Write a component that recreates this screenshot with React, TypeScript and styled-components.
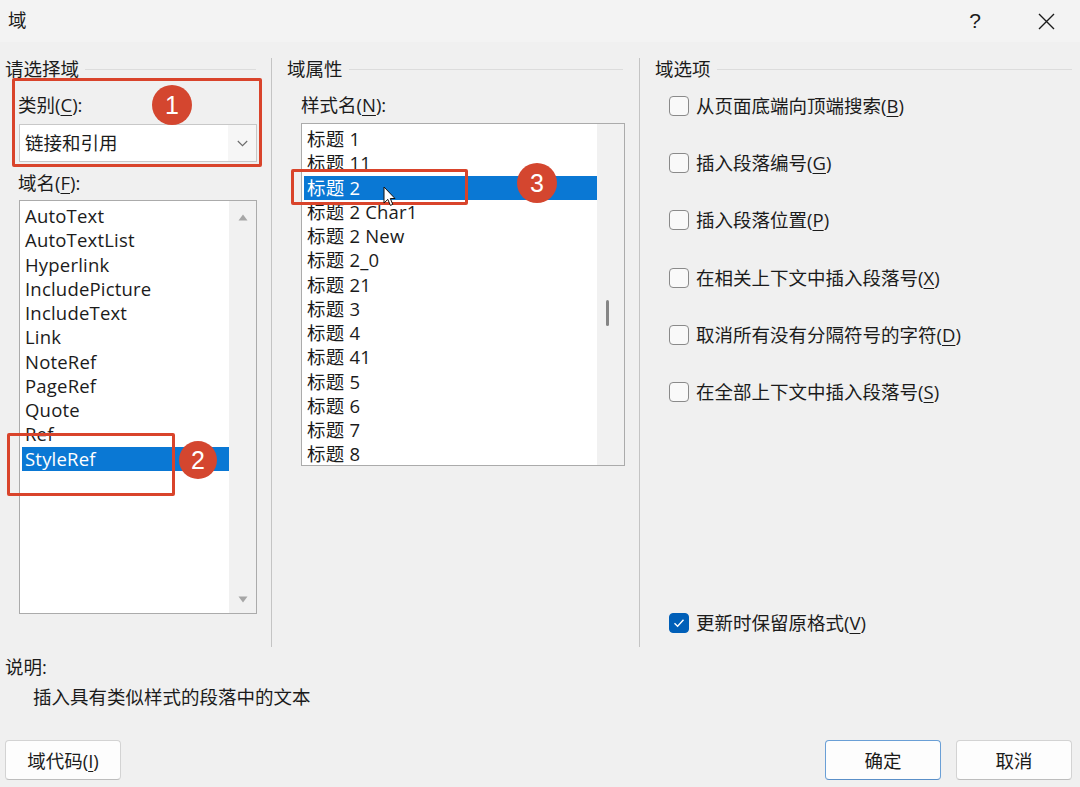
import React from "react"
import styled, { createGlobalStyle } from "styled-components"

const GlobalStyle = createGlobalStyle`
  html, body {
    margin: 0;
    padding: 0;
    background: #f0f0f0;
  }
  body {
    font-family: "Open Sans", "Noto Sans CJK SC", sans-serif;
    font-size: 18.5px;
    color: #1b1b1b;
  }
  * {
    box-sizing: border-box;
  }
`

const Dialog = styled.div`
  position: relative;
  width: 1080px;
  height: 787px;
  overflow: hidden;
  display: flex;
  flex-direction: column;
  background: #f0f0f0;
`

const TitleBar = styled.div`
  height: 42px;
  display: flex;
  align-items: center;
  padding-left: 8px;
  background: #f3f3f3;
`

const Title = styled.div`
  line-height: 22px;
  margin-top: -2px;
`

const TitleActions = styled.div`
  margin-left: auto;
  display: flex;
  gap: 25px;
  padding-right: 11px;
`

const IconButton = styled.div`
  width: 46px;
  height: 40px;
  display: flex;
  align-items: center;
  justify-content: center;
  color: #1b1b1b;
  font-family: "Liberation Sans", Arial, sans-serif;
  font-size: 21px;
`

const Columns = styled.div`
  display: flex;
  margin-top: 16px;
  height: 589px;
`

const Column = styled.div<{ $width?: number }>`
  display: flex;
  flex-direction: column;
  ${(p) => (p.$width ? `width: ${p.$width}px;` : "flex: 1;")}
`

const VDivider = styled.div`
  width: 1px;
  background: #c4c4c4;
`

const GroupHeader = styled.div<{ $inset: number; $trail: number }>`
  display: flex;
  align-items: center;
  height: 22px;
  line-height: 22px;
  padding-left: ${(p) => p.$inset}px;
  padding-right: ${(p) => p.$trail}px;
  &::after {
    content: "";
    flex: 1;
    height: 1px;
    margin-left: 6px;
    background: #dcdcdc;
  }
`

const FieldLabel = styled.div<{ $inset: number; $top: number }>`
  line-height: 22px;
  padding-left: ${(p) => p.$inset}px;
  margin-top: ${(p) => p.$top}px;
`

const AccessKey = styled.span`
  text-decoration: underline;
  text-underline-offset: 3px;
  text-decoration-thickness: 1px;
`

const Combo = styled.div`
  margin: 8px 0 0 19px;
  width: 238px;
  height: 38px;
  display: flex;
  background: #fff;
  border: 1px solid #c8c8c8;
`

const ComboText = styled.div`
  flex: 1;
  padding-left: 5px;
  line-height: 36px;
`

const ComboButton = styled.div`
  width: 28px;
  display: flex;
  align-items: center;
  justify-content: center;
  background: #f6f6f6;
`

const ListBox = styled.div<{ $left: number; $top: number; $width: number; $height: number }>`
  margin: ${(p) => p.$top}px 0 0 ${(p) => p.$left}px;
  width: ${(p) => p.$width}px;
  height: ${(p) => p.$height}px;
  display: flex;
  background: #fff;
  border: 1px solid #ababab;
`

const ListItems = styled.div`
  flex: 1;
  overflow: hidden;
  padding: 3px 0 0 2px;
`

const ListItem = styled.div<{ $selected?: boolean }>`
  height: 24.25px;
  line-height: 24.25px;
  padding-left: 3px;
  white-space: nowrap;
  letter-spacing: 0.2px;
  background: ${(p) => (p.$selected ? "#0a78d4" : "transparent")};
  color: ${(p) => (p.$selected ? "#fff" : "#1b1b1b")};
`

const ScrollTrack = styled.div<{ $arrows?: boolean }>`
  width: 27px;
  display: flex;
  flex-direction: column;
  align-items: center;
  justify-content: ${(p) => (p.$arrows ? "space-between" : "flex-start")};
  padding: ${(p) => (p.$arrows ? "13px 0 10px" : "0")};
  background: #f1f1f1;
`

const ScrollThumb = styled.div<{ $offset: number }>`
  margin-top: ${(p) => p.$offset}px;
  margin-left: -6px;
  width: 3px;
  height: 26px;
  border-radius: 2px;
  background: #858585;
`

const Options = styled.div`
  display: flex;
  flex-direction: column;
  gap: 35.2px;
  margin-top: 15px;
  padding-left: 29px;
`

const CheckRow = styled.label`
  display: flex;
  align-items: center;
  gap: 7px;
  height: 22px;
  line-height: 22px;
`

const BottomCheckRow = styled(CheckRow)`
  margin-top: auto;
  margin-bottom: 13px;
  padding-left: 29px;
`

const CheckBox = styled.span<{ $checked?: boolean }>`
  width: 20px;
  height: 20px;
  border-radius: 4px;
  display: flex;
  align-items: center;
  justify-content: center;
  border: 1px solid ${(p) => (p.$checked ? "#005fb8" : "#8a8a8a")};
  background: ${(p) => (p.$checked ? "#005fb8" : "#f9f9f9")};
`

const Footer = styled.div`
  padding: 9px 8px 0 5px;
`

const FooterLabel = styled.div`
  line-height: 22px;
`

const Description = styled.div`
  line-height: 22px;
  margin-top: 8px;
  padding-left: 28px;
`

const ButtonRow = styled.div`
  display: flex;
  gap: 15px;
  margin-top: 32px;
`

const DialogButton = styled.div<{ $primary?: boolean; $pushRight?: boolean }>`
  width: 116px;
  height: 40px;
  display: flex;
  align-items: center;
  justify-content: center;
  border-radius: 4px;
  background: #fdfdfd;
  border: 1px solid ${(p) => (p.$primary ? "#6a9fd6" : "#d3d3d3")};
  border-bottom-color: ${(p) => (p.$primary ? "#5a8fc8" : "#bdbdbd")};
  ${(p) => (p.$pushRight ? "margin-left: auto;" : "")}
`

const MarkBox = styled.div<{ $x: number; $y: number; $w: number; $h: number }>`
  position: absolute;
  left: ${(p) => p.$x}px;
  top: ${(p) => p.$y}px;
  width: ${(p) => p.$w}px;
  height: ${(p) => p.$h}px;
  border: 3px solid #d9442b;
  border-radius: 2px;
  pointer-events: none;
`

const Badge = styled.div<{ $x: number; $y: number; $size: number }>`
  position: absolute;
  left: ${(p) => p.$x}px;
  top: ${(p) => p.$y}px;
  width: ${(p) => p.$size}px;
  height: ${(p) => p.$size}px;
  border-radius: 50%;
  background: #d4462f;
  color: #fff;
  display: flex;
  align-items: center;
  justify-content: center;
  font-family: "Liberation Sans", Arial, sans-serif;
  font-size: 25px;
`

const Cursor = styled.svg`
  position: absolute;
  left: 383px;
  top: 186px;
`

const categories = [
  "AutoText",
  "AutoTextList",
  "Hyperlink",
  "IncludePicture",
  "IncludeText",
  "Link",
  "NoteRef",
  "PageRef",
  "Quote",
  "Ref",
  "StyleRef",
]

const styles = [
  "标题 1",
  "标题 11",
  "标题 2",
  "标题 2 Char1",
  "标题 2 New",
  "标题 2_0",
  "标题 21",
  "标题 3",
  "标题 4",
  "标题 41",
  "标题 5",
  "标题 6",
  "标题 7",
  "标题 8",
]

const options: { text: string; key: string }[] = [
  { text: "从页面底端向顶端搜索", key: "B" },
  { text: "插入段落编号", key: "G" },
  { text: "插入段落位置", key: "P" },
  { text: "在相关上下文中插入段落号", key: "X" },
  { text: "取消所有没有分隔符号的字符", key: "D" },
  { text: "在全部上下文中插入段落号", key: "S" },
]

const Check = () => (
  <svg width="12" height="10" viewBox="0 0 12 10">
    <path d="M1.5 5.2 L4.6 8.2 L10.5 1.8" fill="none" stroke="#fff" strokeWidth="1.4" />
  </svg>
)

const Triangle: React.FC<{ down?: boolean }> = ({ down }) => (
  <svg width="10" height="7" viewBox="0 0 10 7">
    <path d={down ? "M0.5 0.5 L9.5 0.5 L5 6.5 Z" : "M0.5 6.5 L9.5 6.5 L5 0.5 Z"} fill="#a6a6a6" />
  </svg>
)

const App: React.FC = () => {
  return (
    <Dialog>
      <GlobalStyle />
      <TitleBar>
        <Title>域</Title>
        <TitleActions>
          <IconButton>?</IconButton>
          <IconButton>
            <svg width="17" height="17" viewBox="0 0 17 17">
              <path d="M1 1 L16 16 M16 1 L1 16" stroke="#1b1b1b" strokeWidth="1.4" />
            </svg>
          </IconButton>
        </TitleActions>
      </TitleBar>

      <Columns>
        <Column $width={271}>
          <GroupHeader $inset={5} $trail={15}>请选择域</GroupHeader>
          <FieldLabel $inset={18} $top={14}>
            类别(<AccessKey>C</AccessKey>):
          </FieldLabel>
          <Combo>
            <ComboText>链接和引用</ComboText>
            <ComboButton>
              <svg width="11" height="7" viewBox="0 0 11 7">
                <path d="M0.8 1 L5.5 5.7 L10.2 1" fill="none" stroke="#6a6a6a" strokeWidth="1.1" />
              </svg>
            </ComboButton>
          </Combo>
          <FieldLabel $inset={18} $top={10}>
            域名(<AccessKey>F</AccessKey>):
          </FieldLabel>
          <ListBox $left={19} $top={6} $width={238} $height={414}>
            <ListItems>
              {categories.map((c) => (
                <ListItem key={c} $selected={c === "StyleRef"}>
                  {c}
                </ListItem>
              ))}
            </ListItems>
            <ScrollTrack $arrows>
              <Triangle />
              <Triangle down />
            </ScrollTrack>
          </ListBox>
        </Column>

        <VDivider />

        <Column $width={367}>
          <GroupHeader $inset={15} $trail={16}>域属性</GroupHeader>
          <FieldLabel $inset={29} $top={14}>
            样式名(<AccessKey>N</AccessKey>):
          </FieldLabel>
          <ListBox $left={29} $top={7} $width={324} $height={343}>
            <ListItems>
              {styles.map((s) => (
                <ListItem key={s} $selected={s === "标题 2"}>
                  {s}
                </ListItem>
              ))}
            </ListItems>
            <ScrollTrack>
              <ScrollThumb $offset={176} />
            </ScrollTrack>
          </ListBox>
        </Column>

        <VDivider />

        <Column>
          <GroupHeader $inset={15} $trail={8}>域选项</GroupHeader>
          <Options>
            {options.map((o) => (
              <CheckRow key={o.key}>
                <CheckBox />
                <span>
                  {o.text}(<AccessKey>{o.key}</AccessKey>)
                </span>
              </CheckRow>
            ))}
          </Options>
          <BottomCheckRow>
            <CheckBox $checked>
              <Check />
            </CheckBox>
            <span>
              更新时保留原格式(<AccessKey>V</AccessKey>)
            </span>
          </BottomCheckRow>
        </Column>
      </Columns>

      <Footer>
        <FooterLabel>说明:</FooterLabel>
        <Description>插入具有类似样式的段落中的文本</Description>
        <ButtonRow>
          <DialogButton>
            域代码(<AccessKey>I</AccessKey>)
          </DialogButton>
          <DialogButton $primary $pushRight>
            确定
          </DialogButton>
          <DialogButton>取消</DialogButton>
        </ButtonRow>
      </Footer>

      <MarkBox $x={12} $y={78} $w={250} $h={89} />
      <Badge $x={152} $y={85} $size={40}>1</Badge>
      <MarkBox $x={7} $y={433} $w={168} $h={63} />
      <Badge $x={179} $y={441} $size={38}>2</Badge>
      <MarkBox $x={291} $y={169} $w={177} $h={36} />
      <Badge $x={517} $y={163} $size={40}>3</Badge>
      <Cursor width="13" height="21" viewBox="0 0 13 21">
        <path d="M1 1 L1 17 L4.8 13.4 L7.4 19.4 L9.8 18.4 L7.3 12.5 L12 12.5 Z" fill="#fff" stroke="#111" strokeWidth="1" />
      </Cursor>
    </Dialog>
  )
}

export default App
